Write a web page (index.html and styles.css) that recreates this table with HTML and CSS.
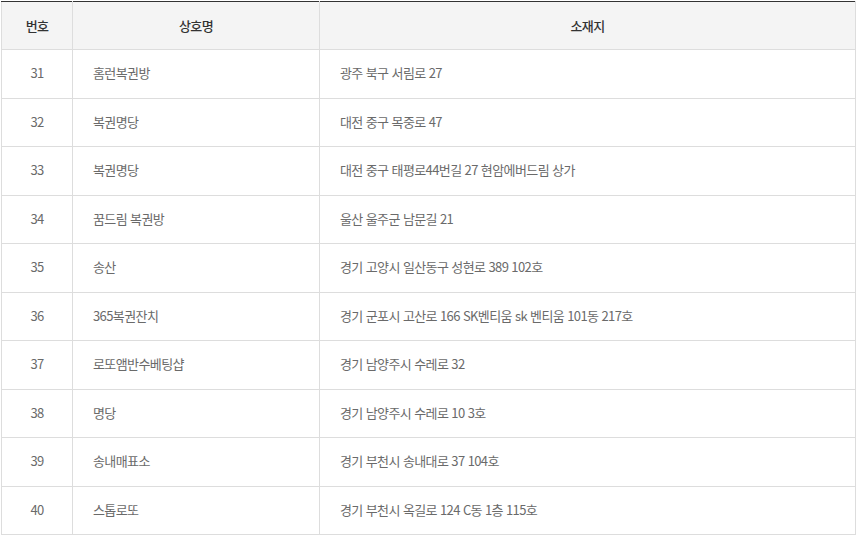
FILE: index.html
```html
<!DOCTYPE html>
<html lang="ko">
<head>
<meta charset="utf-8">
<link rel="stylesheet" href="styles.css">
</head>
<body>
<div class="wrap">
<table class="shops">
  <colgroup>
    <col class="c-no">
    <col class="c-name">
    <col class="c-addr">
  </colgroup>
  <thead>
    <tr><th>번호</th><th>상호명</th><th>소재지</th></tr>
  </thead>
  <tbody>
    <tr><td class="no">31</td><td>홈런복권방</td><td>광주 북구 서림로 27</td></tr>
    <tr><td class="no">32</td><td>복권명당</td><td>대전 중구 목중로 47</td></tr>
    <tr><td class="no">33</td><td>복권명당</td><td>대전 중구 태평로44번길 27 현암에버드림 상가</td></tr>
    <tr><td class="no">34</td><td>꿈드림 복권방</td><td>울산 울주군 남문길 21</td></tr>
    <tr><td class="no">35</td><td>송산</td><td>경기 고양시 일산동구 성현로 389 102호</td></tr>
    <tr><td class="no">36</td><td>365복권잔치</td><td>경기 군포시 고산로 166 SK벤티움 sk 벤티움 101동 217호</td></tr>
    <tr><td class="no">37</td><td>로또앰반수베팅샵</td><td>경기 남양주시 수레로 32</td></tr>
    <tr><td class="no">38</td><td>명당</td><td>경기 남양주시 수레로 10 3호</td></tr>
    <tr><td class="no">39</td><td>송내매표소</td><td>경기 부천시 송내대로 37 104호</td></tr>
    <tr><td class="no">40</td><td>스톱로또</td><td>경기 부천시 옥길로 124 C동 1층 115호</td></tr>
  </tbody>
</table>
</div>
</body>
</html>
```

FILE: styles.css
```css
html, body {
  margin: 0;
  padding: 0;
  background: #fff;
}
.wrap {
  padding: 1px 0 0 1px;
}
.shops {
  width: 855px;
  border-collapse: collapse;
  table-layout: fixed;
  font-family: "Noto Sans CJK KR", "Noto Sans", sans-serif;
  font-size: 13px;
  letter-spacing: -0.6px;
  color: #6a6a6a;
  border-top: 1px solid #333;
}
.c-no { width: 71px; }
.c-name { width: 247px; }
.c-addr { width: auto; }
.shops th {
  height: 46px;
  padding: 0 0 1px 0;
  background: #f4f4f4;
  color: #333;
  font-weight: 500;
  text-align: center;
  border: 1px solid #ddd;
  border-top: 1px solid #333;
}
.shops td {
  height: 45.5px;
  padding: 0 0 2px 20px;
  border: 1px solid #ddd;
  text-align: left;
  vertical-align: middle;
}
.shops td.no {
  padding: 0 0 2px 0;
  text-align: center;
}
```
